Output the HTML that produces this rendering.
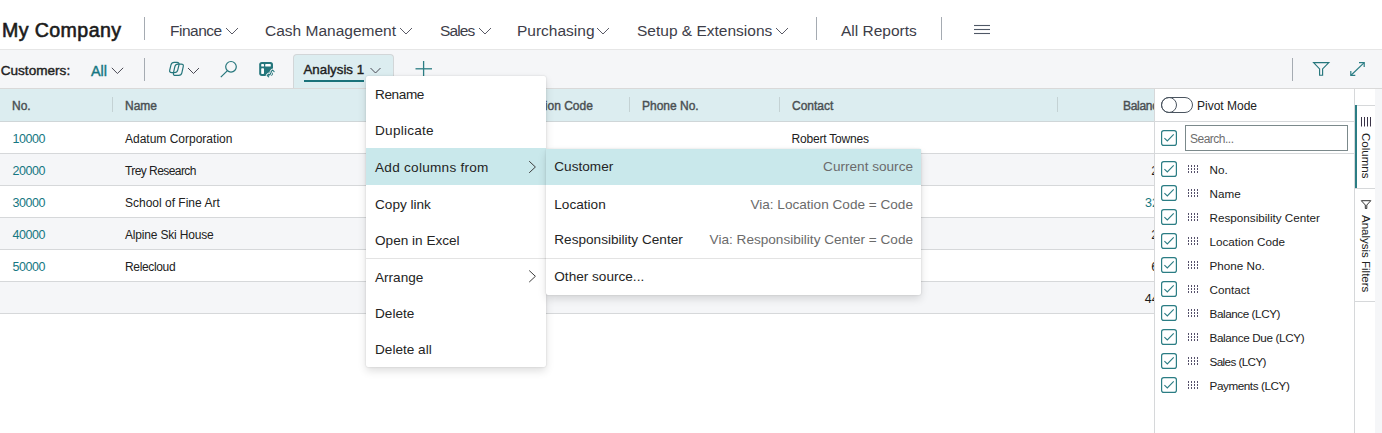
<!DOCTYPE html>
<html><head><meta charset="utf-8">
<style>
*{margin:0;padding:0;box-sizing:border-box}
html,body{width:1382px;height:433px;overflow:hidden;background:#fff;font-family:"Liberation Sans",sans-serif;color:#212121;position:relative}
.a{position:absolute}
.t{position:absolute;white-space:nowrap;line-height:1}
.vs{position:absolute;width:1px;background:#a5abb2}
.hs{position:absolute;height:1px}
svg{position:absolute;overflow:visible}
.sb{-webkit-text-stroke-width:0.4px}
.pl{color:#212121}
.mi{font-size:13.6px;color:#242424}
.gr{color:#6b6b6b}
</style></head><body>

<!-- TOP BAR -->
<div class="a" style="left:0;top:0;width:1382px;height:49px;background:#fff"></div>
<div class="hs" style="left:0;top:49px;width:1382px;background:#e6e6e6"></div>
<div class="t sb" style="left:2px;top:21px;font-size:19.6px;color:#1b1b1b;-webkit-text-stroke-width:0.6px;letter-spacing:0.4px">My Company</div>
<div class="vs" style="left:144px;top:17px;height:23px"></div>

<div class="t nav" style="left:170px;top:22.6px;font-size:15.5px;color:#3d3d48;letter-spacing:-0.5px">Finance</div>
<div class="t nav" style="left:265px;top:22.6px;font-size:15.5px;color:#3d3d48">Cash Management</div>
<div class="t nav" style="left:440px;top:22.6px;font-size:15.5px;color:#3d3d48;letter-spacing:-0.9px">Sales</div>
<div class="t nav" style="left:517px;top:22.6px;font-size:15.5px;color:#3d3d48">Purchasing</div>
<div class="t nav" style="left:637px;top:22.6px;font-size:15.5px;color:#3d3d48">Setup &amp; Extensions</div>
<div class="vs" style="left:816px;top:17px;height:23px"></div>
<div class="t nav" style="left:841px;top:22.6px;font-size:15.5px;color:#3d3d48">All Reports</div>
<div class="vs" style="left:941px;top:17px;height:23px"></div>
<svg style="left:0;top:0" width="1382" height="49">
  <g fill="none" stroke="#5a5a66" stroke-width="1">
    <polyline points="226,28 232,34 238,28"/>
    <polyline points="400,28 406,34 412,28"/>
    <polyline points="479,28 485,34 491,28"/>
    <polyline points="597,28 603,34 609,28"/>
    <polyline points="776,28 782,34 788,28"/>
  </g>
  <g stroke="#4f5866" stroke-width="1.1">
    <line x1="974" y1="25.5" x2="990" y2="25.5"/>
    <line x1="974" y1="29.5" x2="990" y2="29.5"/>
    <line x1="974" y1="33.5" x2="990" y2="33.5"/>
  </g>
</svg>

<!-- TOOLBAR -->
<div class="a" style="left:0;top:50px;width:1382px;height:38px;background:#f5f6f8"></div>
<div class="hs" style="left:0;top:88px;width:1382px;background:#d9d9d9"></div>
<div class="t sb" style="left:0.7px;top:63.5px;font-size:13.6px;color:#222">Customers:</div>
<div class="t sb" style="left:91px;top:63.5px;font-size:14.4px;color:#167782">All</div>
<div class="vs" style="left:144px;top:58px;height:23px"></div>

<!-- tab -->
<div class="a" style="left:293px;top:54px;width:101px;height:34px;background:#dcedf0;border:1px solid #d2d6d8;border-bottom:none;border-radius:4px 4px 0 0"></div>
<div class="t sb" style="left:303.5px;top:62.7px;font-size:13.3px;color:#1e1e1e">Analysis 1</div>
<div class="a" style="left:303.5px;top:80px;width:60.5px;height:2px;background:#19727a"></div>

<div class="vs" style="left:1292px;top:58px;height:23px"></div>

<svg style="left:0;top:50px" width="1382" height="38">
  <g fill="none" stroke="#4a4a55" stroke-width="1">
    <polyline points="111.8,17.8 117.4,23.5 123.2,17.8"/>
    <polyline points="188,18 193.5,23.5 199,18"/>
    <polyline points="370.5,18 375.5,23 380.5,18"/>
  </g>
  <!-- copilot icon -->
  <g fill="none" stroke="#25767c" stroke-width="1.2" stroke-linejoin="round">
    <path d="M170.98 14.93 Q171.60 12.40 174.20 12.40 L177.00 12.40 Q179.60 12.40 178.98 14.93 L177.72 20.07 Q177.10 22.60 174.50 22.60 L171.70 22.60 Q169.10 22.60 169.72 20.07 Z"/>
    <path d="M174.84 16.64 Q175.40 14.10 178.00 14.10 L181.20 14.10 Q183.80 14.10 183.24 16.64 L181.86 22.86 Q181.30 25.40 178.70 25.40 L175.50 25.40 Q172.90 25.40 173.46 22.86 Z"/>
  </g>
  <!-- search -->
  <g fill="none" stroke="#25767c" stroke-width="1.2">
    <circle cx="231" cy="16.8" r="5.3"/>
    <line x1="227.2" y1="20.8" x2="220.8" y2="27.2"/>
  </g>
  <!-- analysis icon -->
  <rect x="259.2" y="12" width="13.8" height="13.9" rx="2.6" fill="#25767c"/>
  <rect x="261.2" y="14.1" width="2.8" height="2.5" rx="0.7" fill="#fff"/>
  <rect x="265.2" y="14.1" width="5.6" height="2.5" rx="0.7" fill="#fff"/>
  <rect x="261.2" y="18.2" width="2.8" height="5.7" rx="0.7" fill="#fff"/>
  <g fill="none" stroke-linecap="round" stroke-linejoin="round">
  <path d="M267.4 25.5 C270 25.5 270.6 24.3 271.1 22.4 C271.4 21 271.9 20.4 272.6 20.2 M271.1 21.7 L272.6 20 L274.1 21.7 M268.7 24.1 L267.2 25.5 L268.7 26.9" stroke="#f5f6f8" stroke-width="3"/>
  <path d="M267.4 25.5 C270 25.5 270.6 24.3 271.1 22.4 C271.4 21 271.9 20.4 272.6 20.2 M271.1 21.7 L272.6 20 L274.1 21.7 M268.7 24.1 L267.2 25.5 L268.7 26.9" stroke="#25767c" stroke-width="1.1"/>
  </g>
  <!-- plus -->
  <g stroke="#2b7d84" stroke-width="1.3">
    <line x1="415.5" y1="18.8" x2="432" y2="18.8"/>
    <line x1="423.6" y1="11" x2="423.6" y2="26"/>
  </g>
  <!-- filter -->
  <path d="M1313.6 12.6 H1328.8 L1322.6 18.9 V25.2 H1319.6 V18.9 Z" fill="none" stroke="#25767c" stroke-width="1.15" stroke-linejoin="miter"/>
  <!-- expand -->
  <g fill="none" stroke="#2b7d84" stroke-width="1.2">
    <line x1="1351" y1="25.3" x2="1364.2" y2="12.6"/>
    <polyline points="1359,12.6 1364.2,12.6 1364.2,17"/>
    <polyline points="1350.8,21 1350.8,25.3 1355.3,25.3"/>
  </g>
</svg>

<!-- GRID -->
<div class="a" style="left:0;top:89px;width:1154px;height:32px;background:#dcedf0"></div>
<div class="hs" style="left:0;top:121px;width:1154px;background:#cfd6d8"></div>
<div class="a" style="left:0;top:122px;width:1154px;height:31px;background:#fff"></div>
<div class="hs" style="left:0;top:153px;width:1154px;background:#d6d8da"></div>
<div class="a" style="left:0;top:154px;width:1154px;height:31px;background:#f5f6f8"></div>
<div class="hs" style="left:0;top:185px;width:1154px;background:#d6d8da"></div>
<div class="a" style="left:0;top:186px;width:1154px;height:31px;background:#fff"></div>
<div class="hs" style="left:0;top:217px;width:1154px;background:#d6d8da"></div>
<div class="a" style="left:0;top:218px;width:1154px;height:31px;background:#f5f6f8"></div>
<div class="hs" style="left:0;top:249px;width:1154px;background:#d6d8da"></div>
<div class="a" style="left:0;top:250px;width:1154px;height:31px;background:#fff"></div>
<div class="hs" style="left:0;top:281px;width:1154px;background:#d6d8da"></div>
<div class="a" style="left:0;top:282px;width:1154px;height:31px;background:#f5f6f8"></div>
<div class="hs" style="left:0;top:313px;width:1154px;background:#d6d8da"></div>

<div class="vs" style="left:112px;top:97px;height:15px;background:#c4d2d4"></div>
<div class="vs" style="left:629px;top:97px;height:15px;background:#c4d2d4"></div>
<div class="vs" style="left:779px;top:97px;height:15px;background:#c4d2d4"></div>
<div class="vs" style="left:1057px;top:97px;height:15px;background:#c4d2d4"></div>

<div class="t hd" style="left:12px;top:100px;font-size:12px;color:#4a4f52;-webkit-text-stroke-width:0.4px">No.</div>
<div class="t hd" style="left:125px;top:100px;font-size:12px;color:#4a4f52;-webkit-text-stroke-width:0.4px">Name</div>
<div class="t hd" style="left:515.5px;top:100px;font-size:12px;color:#4a4f52;-webkit-text-stroke-width:0.4px">Location Code</div>
<div class="t hd" style="left:642px;top:100px;font-size:12px;color:#4a4f52;-webkit-text-stroke-width:0.4px">Phone No.</div>
<div class="t hd" style="left:792px;top:100px;font-size:12px;color:#4a4f52;-webkit-text-stroke-width:0.4px">Contact</div>
<div class="t hd" style="left:1123px;top:100px;font-size:12px;color:#4a4f52;-webkit-text-stroke-width:0.4px;letter-spacing:-0.3px">Balance (LCY)</div>

<div class="t" style="left:12.5px;top:133px;font-size:12.5px;color:#167782;letter-spacing:-0.45px">10000</div>
<div class="t" style="left:12.5px;top:165px;font-size:12.5px;color:#167782;letter-spacing:-0.45px">20000</div>
<div class="t" style="left:12.5px;top:197px;font-size:12.5px;color:#167782;letter-spacing:-0.45px">30000</div>
<div class="t" style="left:12.5px;top:229px;font-size:12.5px;color:#167782;letter-spacing:-0.45px">40000</div>
<div class="t" style="left:12.5px;top:261px;font-size:12.5px;color:#167782;letter-spacing:-0.45px">50000</div>

<div class="t" style="left:125px;top:133px;font-size:12px;color:#212121">Adatum Corporation</div>
<div class="t" style="left:125px;top:165px;font-size:12px;color:#212121;letter-spacing:-0.57px">Trey Research</div>
<div class="t" style="left:125px;top:197px;font-size:12px;color:#212121">School of Fine Art</div>
<div class="t" style="left:125px;top:229px;font-size:12px;color:#212121;letter-spacing:-0.18px">Alpine Ski House</div>
<div class="t" style="left:125px;top:261px;font-size:12px;color:#212121;letter-spacing:-0.35px">Relecloud</div>
<div class="t" style="left:791.5px;top:133px;font-size:12px;color:#212121;letter-spacing:-0.2px">Robert Townes</div>

<div class="t" style="left:1151.3px;top:165px;font-size:12.5px;color:#212121">2,310.38</div>
<div class="t" style="left:1145px;top:197px;font-size:12.5px;color:#167782">32,124.52</div>
<div class="t" style="left:1151.3px;top:229px;font-size:12.5px;color:#212121">2,584.32</div>
<div class="t" style="left:1151.3px;top:261px;font-size:12.5px;color:#212121">6,235.12</div>
<div class="t" style="left:1144.7px;top:293px;font-size:12.5px;color:#1a1a1a">44,254.34</div>

<!-- SIDE PANEL -->
<div class="a" style="left:1154px;top:89px;width:228px;height:344px;background:#fff;border-left:1px solid #d6d8da"></div>
<div class="vs" style="left:1354px;top:89px;height:344px;background:#d6d8da"></div>
<div class="hs" style="left:1155px;top:121px;width:199px;background:#d6d8da"></div>
<div class="hs" style="left:1155px;top:153px;width:199px;background:#d6d8da"></div>
<div class="a" style="left:1161px;top:97px;width:32px;height:16px;border:1.2px solid #4b5560;border-radius:8px"></div>
<div class="a" style="left:1161px;top:97px;width:16px;height:16px;border:1.2px solid #4b5560;border-radius:50%"></div>
<div class="t" style="left:1197px;top:99.5px;font-size:12px;color:#212121">Pivot Mode</div>
<div class="a" style="left:1185px;top:125px;width:163px;height:26px;border:1px solid #7b898b"></div>
<div class="t" style="left:1190px;top:132.6px;font-size:12px;color:#6e6e6e;letter-spacing:-0.5px">Search...</div>

<svg style="left:0;top:0" width="1382" height="433">
<rect x="1161.6" y="161.6" width="14.8" height="14.8" rx="2.2" fill="none" stroke="#2b7d84" stroke-width="1.2"/>
<polyline points="1164.4,169.2 1167.3,172 1173.7,165.4" fill="none" stroke="#2b7d84" stroke-width="1.1"/>
<rect x="1161.6" y="185.6" width="14.8" height="14.8" rx="2.2" fill="none" stroke="#2b7d84" stroke-width="1.2"/>
<polyline points="1164.4,193.2 1167.3,196 1173.7,189.4" fill="none" stroke="#2b7d84" stroke-width="1.1"/>
<rect x="1161.6" y="209.6" width="14.8" height="14.8" rx="2.2" fill="none" stroke="#2b7d84" stroke-width="1.2"/>
<polyline points="1164.4,217.2 1167.3,220 1173.7,213.4" fill="none" stroke="#2b7d84" stroke-width="1.1"/>
<rect x="1161.6" y="233.6" width="14.8" height="14.8" rx="2.2" fill="none" stroke="#2b7d84" stroke-width="1.2"/>
<polyline points="1164.4,241.2 1167.3,244 1173.7,237.4" fill="none" stroke="#2b7d84" stroke-width="1.1"/>
<rect x="1161.6" y="257.6" width="14.8" height="14.8" rx="2.2" fill="none" stroke="#2b7d84" stroke-width="1.2"/>
<polyline points="1164.4,265.2 1167.3,268 1173.7,261.4" fill="none" stroke="#2b7d84" stroke-width="1.1"/>
<rect x="1161.6" y="281.6" width="14.8" height="14.8" rx="2.2" fill="none" stroke="#2b7d84" stroke-width="1.2"/>
<polyline points="1164.4,289.2 1167.3,292 1173.7,285.4" fill="none" stroke="#2b7d84" stroke-width="1.1"/>
<rect x="1161.6" y="305.6" width="14.8" height="14.8" rx="2.2" fill="none" stroke="#2b7d84" stroke-width="1.2"/>
<polyline points="1164.4,313.2 1167.3,316 1173.7,309.4" fill="none" stroke="#2b7d84" stroke-width="1.1"/>
<rect x="1161.6" y="329.6" width="14.8" height="14.8" rx="2.2" fill="none" stroke="#2b7d84" stroke-width="1.2"/>
<polyline points="1164.4,337.2 1167.3,340 1173.7,333.4" fill="none" stroke="#2b7d84" stroke-width="1.1"/>
<rect x="1161.6" y="353.6" width="14.8" height="14.8" rx="2.2" fill="none" stroke="#2b7d84" stroke-width="1.2"/>
<polyline points="1164.4,361.2 1167.3,364 1173.7,357.4" fill="none" stroke="#2b7d84" stroke-width="1.1"/>
<rect x="1161.6" y="377.6" width="14.8" height="14.8" rx="2.2" fill="none" stroke="#2b7d84" stroke-width="1.2"/>
<polyline points="1164.4,385.2 1167.3,388 1173.7,381.4" fill="none" stroke="#2b7d84" stroke-width="1.1"/>
<rect x="1161.6" y="130.6" width="14.8" height="14.8" rx="2.2" fill="none" stroke="#2b7d84" stroke-width="1.2"/>
<polyline points="1164.4,138.2 1167.3,141 1173.7,134.4" fill="none" stroke="#2b7d84" stroke-width="1.1"/>
</svg>
<div class="t pl" style="left:1209.5px;top:163.5px;font-size:11.7px">No.</div>
<div class="t pl" style="left:1209.5px;top:187.5px;font-size:11.7px">Name</div>
<div class="t pl" style="left:1209.5px;top:211.5px;font-size:11.7px">Responsibility Center</div>
<div class="t pl" style="left:1209.5px;top:235.5px;font-size:11.7px">Location Code</div>
<div class="t pl" style="left:1209.5px;top:259.5px;font-size:11.7px">Phone No.</div>
<div class="t pl" style="left:1209.5px;top:283.5px;font-size:11.7px">Contact</div>
<div class="t pl" style="left:1209.5px;top:307.5px;font-size:11.7px;letter-spacing:-0.42px">Balance (LCY)</div>
<div class="t pl" style="left:1209.5px;top:331.5px;font-size:11.7px;letter-spacing:-0.35px">Balance Due (LCY)</div>
<div class="t pl" style="left:1209.5px;top:355.5px;font-size:11.7px;letter-spacing:-0.6px">Sales (LCY)</div>
<div class="t pl" style="left:1209.5px;top:379.5px;font-size:11.7px;letter-spacing:-0.42px">Payments (LCY)</div>
<svg style="left:0;top:0" width="1382" height="433"><g fill="#55506a"><rect x="1188" y="165" width="1" height="2"/><rect x="1188" y="168" width="1" height="2"/><rect x="1188" y="171" width="1" height="2"/><rect x="1191" y="165" width="1" height="2"/><rect x="1191" y="168" width="1" height="2"/><rect x="1191" y="171" width="1" height="2"/><rect x="1194" y="165" width="1" height="2"/><rect x="1194" y="168" width="1" height="2"/><rect x="1194" y="171" width="1" height="2"/><rect x="1197" y="165" width="1" height="2"/><rect x="1197" y="168" width="1" height="2"/><rect x="1197" y="171" width="1" height="2"/><rect x="1188" y="189" width="1" height="2"/><rect x="1188" y="192" width="1" height="2"/><rect x="1188" y="195" width="1" height="2"/><rect x="1191" y="189" width="1" height="2"/><rect x="1191" y="192" width="1" height="2"/><rect x="1191" y="195" width="1" height="2"/><rect x="1194" y="189" width="1" height="2"/><rect x="1194" y="192" width="1" height="2"/><rect x="1194" y="195" width="1" height="2"/><rect x="1197" y="189" width="1" height="2"/><rect x="1197" y="192" width="1" height="2"/><rect x="1197" y="195" width="1" height="2"/><rect x="1188" y="213" width="1" height="2"/><rect x="1188" y="216" width="1" height="2"/><rect x="1188" y="219" width="1" height="2"/><rect x="1191" y="213" width="1" height="2"/><rect x="1191" y="216" width="1" height="2"/><rect x="1191" y="219" width="1" height="2"/><rect x="1194" y="213" width="1" height="2"/><rect x="1194" y="216" width="1" height="2"/><rect x="1194" y="219" width="1" height="2"/><rect x="1197" y="213" width="1" height="2"/><rect x="1197" y="216" width="1" height="2"/><rect x="1197" y="219" width="1" height="2"/><rect x="1188" y="237" width="1" height="2"/><rect x="1188" y="240" width="1" height="2"/><rect x="1188" y="243" width="1" height="2"/><rect x="1191" y="237" width="1" height="2"/><rect x="1191" y="240" width="1" height="2"/><rect x="1191" y="243" width="1" height="2"/><rect x="1194" y="237" width="1" height="2"/><rect x="1194" y="240" width="1" height="2"/><rect x="1194" y="243" width="1" height="2"/><rect x="1197" y="237" width="1" height="2"/><rect x="1197" y="240" width="1" height="2"/><rect x="1197" y="243" width="1" height="2"/><rect x="1188" y="261" width="1" height="2"/><rect x="1188" y="264" width="1" height="2"/><rect x="1188" y="267" width="1" height="2"/><rect x="1191" y="261" width="1" height="2"/><rect x="1191" y="264" width="1" height="2"/><rect x="1191" y="267" width="1" height="2"/><rect x="1194" y="261" width="1" height="2"/><rect x="1194" y="264" width="1" height="2"/><rect x="1194" y="267" width="1" height="2"/><rect x="1197" y="261" width="1" height="2"/><rect x="1197" y="264" width="1" height="2"/><rect x="1197" y="267" width="1" height="2"/><rect x="1188" y="285" width="1" height="2"/><rect x="1188" y="288" width="1" height="2"/><rect x="1188" y="291" width="1" height="2"/><rect x="1191" y="285" width="1" height="2"/><rect x="1191" y="288" width="1" height="2"/><rect x="1191" y="291" width="1" height="2"/><rect x="1194" y="285" width="1" height="2"/><rect x="1194" y="288" width="1" height="2"/><rect x="1194" y="291" width="1" height="2"/><rect x="1197" y="285" width="1" height="2"/><rect x="1197" y="288" width="1" height="2"/><rect x="1197" y="291" width="1" height="2"/><rect x="1188" y="309" width="1" height="2"/><rect x="1188" y="312" width="1" height="2"/><rect x="1188" y="315" width="1" height="2"/><rect x="1191" y="309" width="1" height="2"/><rect x="1191" y="312" width="1" height="2"/><rect x="1191" y="315" width="1" height="2"/><rect x="1194" y="309" width="1" height="2"/><rect x="1194" y="312" width="1" height="2"/><rect x="1194" y="315" width="1" height="2"/><rect x="1197" y="309" width="1" height="2"/><rect x="1197" y="312" width="1" height="2"/><rect x="1197" y="315" width="1" height="2"/><rect x="1188" y="333" width="1" height="2"/><rect x="1188" y="336" width="1" height="2"/><rect x="1188" y="339" width="1" height="2"/><rect x="1191" y="333" width="1" height="2"/><rect x="1191" y="336" width="1" height="2"/><rect x="1191" y="339" width="1" height="2"/><rect x="1194" y="333" width="1" height="2"/><rect x="1194" y="336" width="1" height="2"/><rect x="1194" y="339" width="1" height="2"/><rect x="1197" y="333" width="1" height="2"/><rect x="1197" y="336" width="1" height="2"/><rect x="1197" y="339" width="1" height="2"/><rect x="1188" y="357" width="1" height="2"/><rect x="1188" y="360" width="1" height="2"/><rect x="1188" y="363" width="1" height="2"/><rect x="1191" y="357" width="1" height="2"/><rect x="1191" y="360" width="1" height="2"/><rect x="1191" y="363" width="1" height="2"/><rect x="1194" y="357" width="1" height="2"/><rect x="1194" y="360" width="1" height="2"/><rect x="1194" y="363" width="1" height="2"/><rect x="1197" y="357" width="1" height="2"/><rect x="1197" y="360" width="1" height="2"/><rect x="1197" y="363" width="1" height="2"/><rect x="1188" y="381" width="1" height="2"/><rect x="1188" y="384" width="1" height="2"/><rect x="1188" y="387" width="1" height="2"/><rect x="1191" y="381" width="1" height="2"/><rect x="1191" y="384" width="1" height="2"/><rect x="1191" y="387" width="1" height="2"/><rect x="1194" y="381" width="1" height="2"/><rect x="1194" y="384" width="1" height="2"/><rect x="1194" y="387" width="1" height="2"/><rect x="1197" y="381" width="1" height="2"/><rect x="1197" y="384" width="1" height="2"/><rect x="1197" y="387" width="1" height="2"/></g></svg>
<!-- vertical tabs -->
<div class="hs" style="left:1355px;top:105px;width:20px;background:#d6d8da"></div>
<div class="a" style="left:1355px;top:105px;width:2px;height:83px;background:#2b7d84"></div>
<div class="hs" style="left:1355px;top:188px;width:20px;background:#d6d8da"></div>
<div class="hs" style="left:1355px;top:301px;width:20px;background:#d6d8da"></div>
<div class="a" style="left:1375px;top:89px;width:7px;height:344px;background:#f5f6f8"></div>
<div class="t" style="left:1358px;top:133px;font-size:11.5px;color:#212121;transform-origin:0 0;transform:translate(13px,0) rotate(90deg)">Columns</div>
<div class="t" style="left:1358px;top:215px;font-size:11.5px;color:#212121;transform-origin:0 0;transform:translate(13px,0) rotate(90deg)">Analysis Filters</div>
<svg style="left:0;top:0" width="1382" height="433">
 <g stroke="#3a3448" stroke-width="1"><line x1="1361.5" y1="117" x2="1361.5" y2="126.5"/><line x1="1364.5" y1="117" x2="1364.5" y2="126.5"/><line x1="1367.5" y1="117" x2="1367.5" y2="126.5"/><line x1="1370.5" y1="117" x2="1370.5" y2="126.5"/></g>
 <path d="M1361.3 200.7 H1370.8 L1366.8 205 V208.5 L1365.3 208.5 V205 Z" fill="none" stroke="#333" stroke-width="1" stroke-linejoin="round"/>
</svg>

<!-- CONTEXT MENU -->
<div class="a" style="left:366px;top:76px;width:180px;height:291px;background:#fff;box-shadow:0 0 2px rgba(0,0,0,.16),0 4px 9px rgba(0,0,0,.13);border-radius:2px"></div>
<div class="a" style="left:366px;top:148px;width:180px;height:37px;background:#c9e8eb"></div>
<div class="hs" style="left:366px;top:258px;width:180px;background:#e3e3e3"></div>
<div class="t mi" style="left:375px;top:87.5px;letter-spacing:-0.4px">Rename</div>
<div class="t mi" style="left:375px;top:123.5px;letter-spacing:0.25px">Duplicate</div>
<div class="t mi" style="left:375px;top:160.5px;letter-spacing:0.26px">Add columns from</div>
<div class="t mi" style="left:375px;top:197.5px">Copy link</div>
<div class="t mi" style="left:375px;top:233.5px">Open in Excel</div>
<div class="t mi" style="left:375px;top:270.5px">Arrange</div>
<div class="t mi" style="left:375px;top:306.5px">Delete</div>
<div class="t mi" style="left:375px;top:342.5px">Delete all</div>
<svg style="left:0;top:0" width="1382" height="433">
 <polyline points="529.2,161.2 535.4,167 529.2,172.8" fill="none" stroke="#3d3d3d" stroke-width="1"/>
 <polyline points="529.2,270.5 535.4,276.3 529.2,282.1" fill="none" stroke="#3d3d3d" stroke-width="1"/>
</svg>

<!-- SUBMENU -->
<div class="a" style="left:546px;top:149px;width:375px;height:145.5px;background:#fff;box-shadow:0 0 2px rgba(0,0,0,.16),0 4px 9px rgba(0,0,0,.13);border-radius:2px"></div>
<div class="a" style="left:546px;top:149px;width:375px;height:36px;background:#c9e8eb"></div>
<div class="hs" style="left:546px;top:258px;width:375px;background:#e3e3e3"></div>
<div class="t mi" style="left:554.3px;top:160px">Customer</div>
<div class="t mi" style="left:554.3px;top:197.5px">Location</div>
<div class="t mi" style="left:554.3px;top:233px">Responsibility Center</div>
<div class="t mi" style="left:554.3px;top:270px">Other source...</div>
<div class="t mi gr" style="right:469px;top:160px">Current source</div>
<div class="t mi gr" style="right:469px;top:197.5px">Via: Location Code = Code</div>
<div class="t mi gr" style="right:469px;top:233px">Via: Responsibility Center = Code</div>

</body></html>
